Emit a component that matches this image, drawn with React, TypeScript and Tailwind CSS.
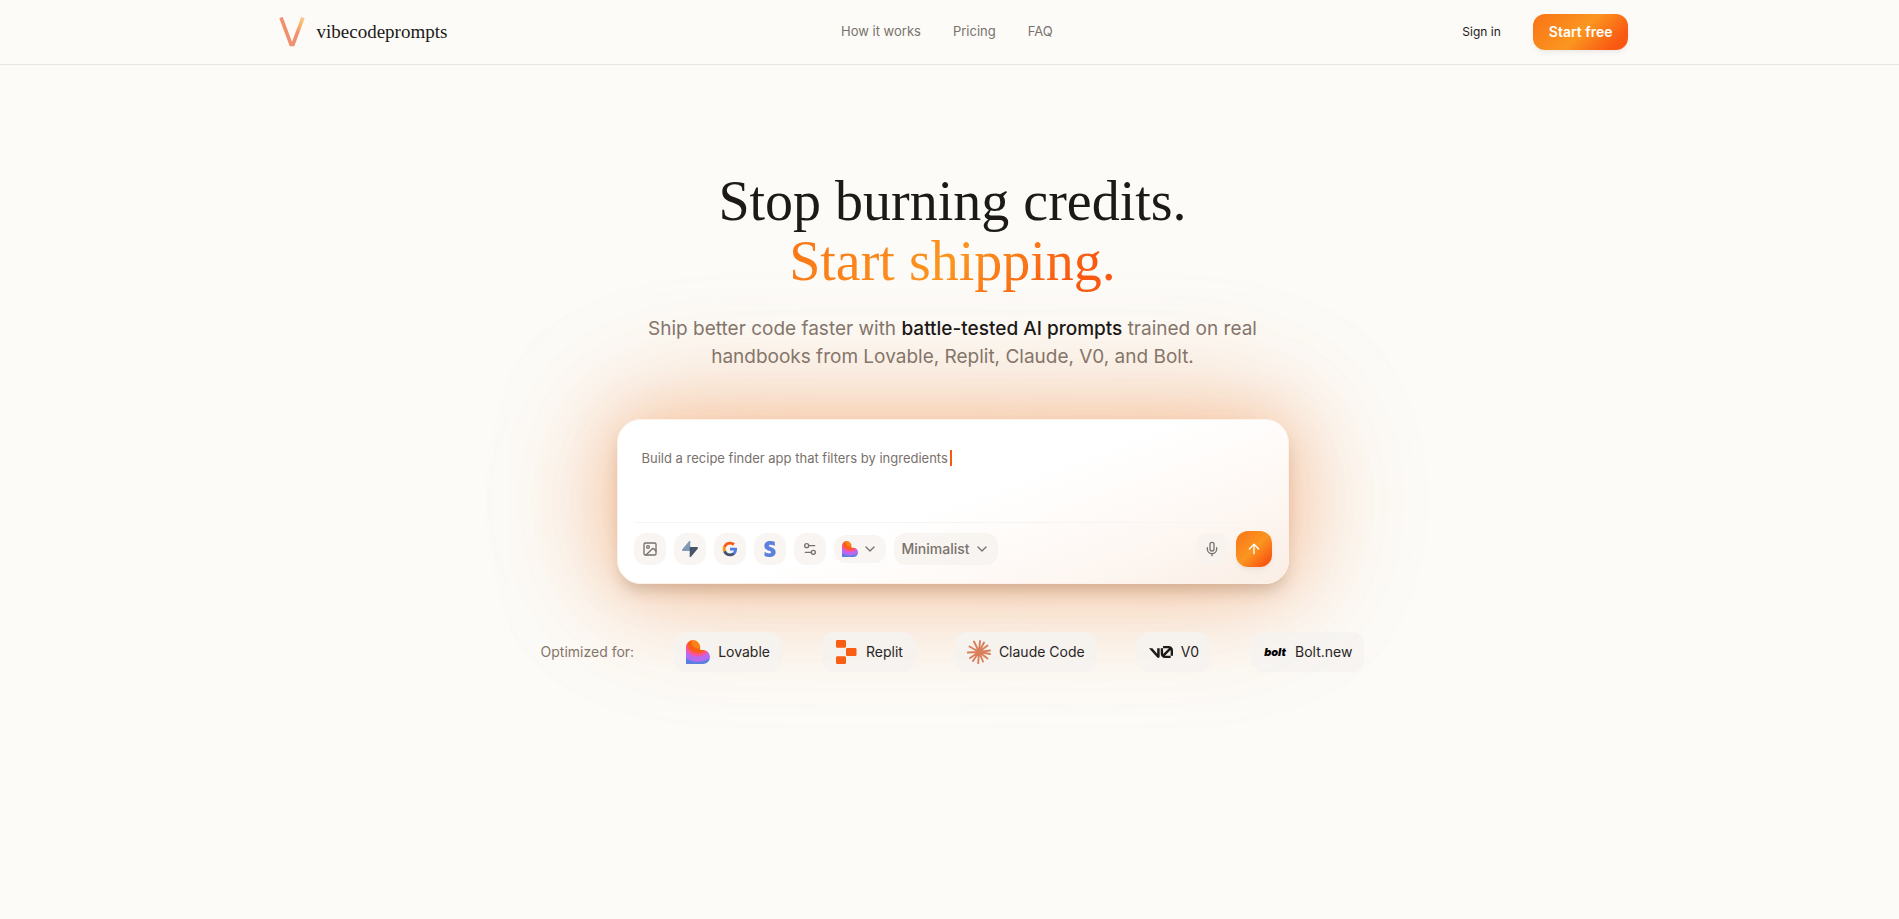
import { useState } from "react";
import type { ReactNode } from "react";
import { ArrowUp, ChevronDown, Image, Mic, Settings2 } from "lucide-react";
import { FaStripeS } from "react-icons/fa6";

function Logo() {
  return (
    <svg viewBox="0 0 26 30" className="h-[30px] w-[26px]" fill="none" aria-hidden="true">
      <defs>
        <linearGradient id="logo" x1="8" y1="20" x2="26" y2="2" gradientUnits="userSpaceOnUse">
          <stop offset="0.4" stopColor="#f0906c" />
          <stop offset="0.65" stopColor="#f9b066" />
          <stop offset="1" stopColor="#fccb90" />
        </linearGradient>
      </defs>
      <path d="M2 0.5 12 27.5h2L24 0.5" stroke="url(#logo)" strokeWidth="3.6" />
    </svg>
  );
}

function LovableIcon({ id, className }: { id: string; className: string }) {
  return (
    <svg viewBox="0 0 24 24" className={className} aria-hidden="true">
      <defs>
        <radialGradient id={id} cx="12" cy="2" r="24" gradientUnits="userSpaceOnUse">
          <stop offset="0.22" stopColor="#fa8318" />
          <stop offset="0.32" stopColor="#f95c14" />
          <stop offset="0.42" stopColor="#f95c14" />
          <stop offset="0.5" stopColor="#fa5388" />
          <stop offset="0.58" stopColor="#f555a8" />
          <stop offset="0.63" stopColor="#bb68ee" />
          <stop offset="0.8" stopColor="#b46bf0" />
          <stop offset="0.85" stopColor="#5b7fe0" />
        </radialGradient>
      </defs>
      <path
        d="M0 24V7.2a7.1 7.1 0 0 1 14.2 0V10h2.8a7 7 0 0 1 0 14Z"
        fill={`url(#${id})`}
      />
    </svg>
  );
}

function ReplitIcon() {
  return (
    <svg viewBox="0 0 24 24" className="size-6" fill="#f95f14" aria-hidden="true">
      <rect x="2" y="0" width="10" height="7.8" rx="1.2" />
      <rect x="12" y="8" width="10.5" height="8" rx="1.2" />
      <rect x="2" y="16.2" width="10" height="7.8" rx="1.2" />
    </svg>
  );
}

function ClaudeIcon() {
  return (
    <svg
      viewBox="0 0 24 24"
      className="size-6"
      stroke="#d97f59"
      strokeWidth="1.9"
      strokeLinecap="round"
      aria-hidden="true"
    >
      <path d="M12 12 13 1M12 12l5-9.5M12 12l8.5-6.5M12 12l11-1.5M12 12l11 2M12 12l8.5 6.5M12 12l4 9.5M12 12l-.8 11.3M12 12l-6 9M12 12l-9 6M12 12l-11.3.5M12 12 2.500 6.500M12 12 7 1.500" />
    </svg>
  );
}

function V0Icon() {
  return (
    <svg viewBox="0 0 24 24" className="size-6" fill="#1c1917" aria-hidden="true">
      <path d="M14.066 6.028v2.22h5.729q.075-.001.148.005l-5.853 5.752a2 2 0 0 1-.024-.309V8.247h-2.353v5.45c0 2.322 1.935 4.222 4.258 4.222h5.675v-2.22h-5.675q-.03 0-.059-.003l5.729-5.629q.006.082.006.166v5.465H24v-5.465a4.204 4.204 0 0 0-4.205-4.205zM0 8.245l8.28 9.266c.839.94 2.396.346 2.396-.914V8.245H8.19v5.44l-4.86-5.44Z" />
    </svg>
  );
}

function BoltIcon() {
  return (
    <span className="w-6 text-center text-[11px] leading-6 font-black text-black italic" aria-hidden="true">
      bolt
    </span>
  );
}

function SupabaseIcon() {
  return (
    <svg viewBox="0 0 16 16" className="size-4" aria-hidden="true">
      <path d="M8.300 0v10H1.200C.2 10-.3 8.900.3 8.200L7 .3C7.400-.2 8.300 0 8.300 0Z" fill="#7f9ab5" />
      <path d="M7.700 16V6h7.100c1 0 1.500 1.100.9 1.800L9 15.700c-.4.5-1.300.3-1.300.3Z" fill="#45566a" />
    </svg>
  );
}

function GoogleIcon() {
  return (
    <svg viewBox="0 0 24 24" className="size-4" aria-hidden="true">
      <path
        fill="#5380e0"
        d="M22.560 12.250c0-.78-.07-1.530-.2-2.250H12v4.260h5.920c-.26 1.370-1.040 2.530-2.210 3.310v2.770h3.570c2.080-1.920 3.280-4.740 3.280-8.090z"
      />
      <path
        fill="#43546a"
        d="M12 23c2.970 0 5.460-.98 7.280-2.660l-3.570-2.770c-.98.660-2.230 1.060-3.710 1.060-2.860 0-5.290-1.930-6.160-4.530H2.180v2.840C3.990 20.530 7.700 23 12 23z"
      />
      <path
        fill="#f99a1e"
        d="M5.840 14.090c-.22-.66-.35-1.360-.35-2.090s.13-1.430.35-2.090V7.070H2.180C1.430 8.550 1 10.220 1 12s.43 3.450 1.180 4.930l3.660-2.840z"
      />
      <path
        fill="#f95a1a"
        d="M12 5.380c1.620 0 3.060.56 4.210 1.640l3.150-3.150C17.450 2.090 14.970 1 12 1 7.700 1 3.990 3.470 2.180 7.070l3.660 2.840c.87-2.600 3.300-4.530 6.160-4.530z"
      />
    </svg>
  );
}

function ToolButton({ label, children }: { label: string; children: ReactNode }) {
  return (
    <button
      type="button"
      aria-label={label}
      className="flex size-8 items-center justify-center rounded-xl bg-[#f6f2ef]/80 text-stone-500"
    >
      {children}
    </button>
  );
}

const navLinks = ["How it works", "Pricing", "FAQ"];

const tools = [
  { name: "Lovable", icon: <LovableIcon id="lovable-chip" className="size-6" /> },
  { name: "Replit", icon: <ReplitIcon /> },
  { name: "Claude Code", icon: <ClaudeIcon /> },
  { name: "V0", icon: <V0Icon /> },
  { name: "Bolt.new", icon: <BoltIcon /> },
];

function Header() {
  return (
    <header className="border-b border-[#e3e6e3] pl-2">
      <div className="mx-auto flex h-16 max-w-[1350px] items-center justify-between">
        <a href="#" className="flex items-center gap-3">
          <Logo />
          <span className="font-['Liberation_Serif',serif] text-[19px] text-stone-900">
            vibecodeprompts
          </span>
        </a>
        <nav className="flex items-center gap-8 text-[13px] text-stone-500">
          {navLinks.map((link) => (
            <a key={link} href="#">
              {link}
            </a>
          ))}
        </nav>
        <div className="flex items-center gap-4">
          <a href="#" className="px-4 text-xs text-stone-900">
            Sign in
          </a>
          <button
            type="button"
            className="h-9 rounded-xl bg-[linear-gradient(135deg,#f97316,#fb9620_50%,#f95a12_85%)] px-4 text-sm font-semibold text-white shadow-md shadow-stone-900/5"
          >
            Start free
          </button>
        </div>
      </div>
    </header>
  );
}

function PromptBox() {
  const [prompt, setPrompt] = useState("");

  return (
    <form
      onSubmit={(e) => e.preventDefault()}
      className="mt-12 w-full max-w-2xl rounded-3xl border border-[#fdf1e9] bg-[linear-gradient(160deg,#ffffff_50%,#fef8f4_75%,#faeee5)] p-4 shadow-[0_10px_16px_-4px_rgba(100,60,30,0.26),0_0_50px_rgba(245,130,50,0.16),0_0_110px_10px_rgba(245,125,50,0.4),0_0_150px_14px_rgba(220,200,150,0.12)]"
    >
      <div className="relative">
        <textarea
          aria-label="Describe your app"
          value={prompt}
          onChange={(e) => setPrompt(e.target.value)}
          className="block h-[86px] w-full resize-none bg-transparent px-2 py-3 text-[13px] leading-5 text-stone-900 outline-none"
        />
        {prompt === "" && (
          <div className="pointer-events-none absolute top-3 left-2 flex items-center text-[13px] leading-5 text-stone-500">
            Build a recipe finder app that filters by ingredients
            <span className="ml-[2px] h-4 w-[2px] bg-[#f95a12]" />
          </div>
        )}
      </div>
      <div className="flex items-center gap-2 border-t border-stone-100 pt-2">
        <ToolButton label="Add image">
          <Image className="size-4" />
        </ToolButton>
        <ToolButton label="Supabase">
          <SupabaseIcon />
        </ToolButton>
        <ToolButton label="Google">
          <GoogleIcon />
        </ToolButton>
        <ToolButton label="Stripe">
          <FaStripeS className="size-4 text-[#5b80de]" />
        </ToolButton>
        <ToolButton label="Settings">
          <Settings2 className="size-4" />
        </ToolButton>
        <div className="relative flex h-7 items-center gap-1 rounded-xl bg-[#f6f2ef]/80 px-2 text-stone-500">
          <LovableIcon id="lovable-select" className="size-4" />
          <ChevronDown className="size-4" />
          <select aria-label="Platform" className="absolute inset-0 opacity-0">
            <option>Lovable</option>
            <option>Replit</option>
          </select>
        </div>
        <div className="relative flex h-8 items-center rounded-xl bg-[#f6f2ef]/80 text-stone-500">
          <select
            aria-label="Style"
            className="h-8 appearance-none bg-transparent pr-7 pl-2 text-sm font-medium outline-none"
          >
            <option>Minimalist</option>
            <option>Playful</option>
          </select>
          <ChevronDown className="pointer-events-none absolute right-2 size-4" />
        </div>
        <div className="ml-auto flex items-center gap-2">
          <ToolButton label="Dictate">
            <Mic className="size-4" />
          </ToolButton>
          <button
            type="submit"
            aria-label="Send"
            className="flex size-9 items-center justify-center rounded-xl bg-[linear-gradient(135deg,#f97316,#fb9620_50%,#f95a12_85%)] text-white shadow-md shadow-stone-900/5"
          >
            <ArrowUp className="size-4" />
          </button>
        </div>
      </div>
    </form>
  );
}

export default function App() {
  return (
    <div className="min-h-screen bg-[#fcfbf8] font-['Inter',sans-serif]">
      <Header />
      <main className="flex flex-col items-center pt-[106px] pl-1.5">
        <h1 className="text-center font-['Liberation_Serif',serif] text-[56px] leading-[60px] text-stone-900">
          Stop burning credits.
          <br />
          <span className="bg-[linear-gradient(135deg,#f97316,#fb9620_50%,#f95a12_85%)] bg-clip-text text-transparent">
            Start shipping.
          </span>
        </h1>
        <p className="relative z-10 mt-6 max-w-2xl text-center text-[19px] leading-7 text-[#85756a]">
          Ship better code faster with{" "}
          <strong className="font-medium text-stone-900">battle-tested AI prompts</strong> trained on real
          <br />
          handbooks from Lovable, Replit, Claude, V0, and Bolt.
        </p>
        <PromptBox />
        <div className="mt-12 flex items-center gap-10 text-sm">
          <span className="text-[#85756a]">Optimized for:</span>
          {tools.map((tool) => (
            <div key={tool.name} className="flex h-10 items-center gap-2 rounded-xl bg-[#f5f3f0]/80 px-3 text-stone-800">
              {tool.icon}
              {tool.name}
            </div>
          ))}
        </div>
      </main>
    </div>
  );
}
